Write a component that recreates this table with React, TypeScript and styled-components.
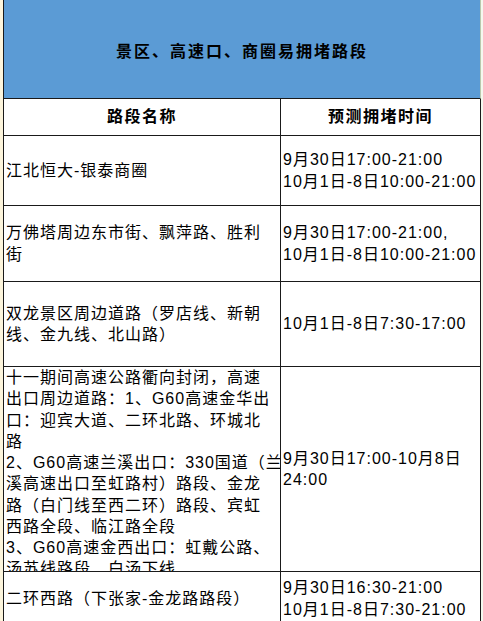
import styled, { createGlobalStyle } from "styled-components";

interface IRow {
  height: number;
  name: string[];
  time: string[];
  nameTop?: boolean;
}

const rows: IRow[] = [
  {
    height: 70,
    name: ["江北恒大-银泰商圈"],
    time: ["9月30日17:00-21:00", "10月1日-8日10:00-21:00"],
  },
  {
    height: 76,
    name: ["万佛塔周边东市街、飘萍路、胜利", "街"],
    time: ["9月30日17:00-21:00,", "10月1日-8日10:00-21:00"],
  },
  {
    height: 85,
    name: ["双龙景区周边道路（罗店线、新朝", "线、金九线、北山路）"],
    time: ["10月1日-8日7:30-17:00"],
  },
  {
    height: 205,
    nameTop: true,
    name: [
      "十一期间高速公路衢向封闭，高速",
      "出口周边道路：1、G60高速金华出",
      "口：迎宾大道、二环北路、环城北",
      "路",
      "2、G60高速兰溪出口：330国道（兰",
      "溪高速出口至虹路村）路段、金龙",
      "路（白门线至西二环）路段、宾虹",
      "西路全段、临江路全段",
      "3、G60高速金西出口：虹戴公路、",
      "汤苏线路段、白汤下线",
    ],
    time: ["9月30日17:00-10月8日", "24:00"],
  },
  {
    height: 54,
    name: ["二环西路（下张家-金龙路路段）"],
    time: ["9月30日16:30-21:00", "10月1日-8日7:30-21:00"],
  },
];

const GlobalStyle = createGlobalStyle`
  html, body {
    margin: 0;
    padding: 0;
    background: #fdf5dc;
    overflow: hidden;
  }
  body {
    font-family: "Liberation Sans", "Noto Sans CJK SC", sans-serif;
    color: #000;
  }
`;

const Sheet = styled.div`
  display: flex;
  width: 483px;
  height: 621px;
  overflow: hidden;
`;

const Gutter = styled.div<{ $w: number; $bg: string }>`
  flex: 0 0 ${(p) => p.$w}px;
  background: ${(p) => p.$bg};
`;

const Table = styled.div`
  flex: 0 0 478px;
  display: flex;
  flex-direction: column;
  border-left: 1px solid #1a1a1a;
  border-right: 1px solid #1a1a1a;
  box-sizing: border-box;
  background: #fff;
`;

const Title = styled.div`
  flex: 0 0 99px;
  height: 99px;
  box-sizing: border-box;
  display: flex;
  align-items: center;
  justify-content: center;
  background: #5b9bd5;
  border-bottom: 1px solid #1a1a1a;
  margin-right: -1px;
  border-right: 1px solid #b9c9ae;
  font-size: 16px;
  font-weight: 700;
  letter-spacing: 2px;
  padding-top: 1px;
`;

const Row = styled.div<{ $h: number }>`
  display: grid;
  grid-template-columns: 276px 200px;
  height: ${(p) => p.$h}px;
  flex: 0 0 ${(p) => p.$h}px;
  box-sizing: border-box;
  border-bottom: 1px solid #1a1a1a;
`;

const Cell = styled.div<{ $head?: boolean; $top?: boolean; $pad: number }>`
  display: flex;
  flex-direction: column;
  justify-content: ${(p) => (p.$top ? "flex-start" : "center")};
  align-items: ${(p) => (p.$head ? "center" : "flex-start")};
  box-sizing: border-box;
  overflow: hidden;
  padding-left: ${(p) => (p.$head ? 0 : p.$pad)}px;
  font-size: 16px;
  font-weight: ${(p) => (p.$head ? 700 : 400)};
  letter-spacing: ${(p) => (p.$head ? 1.5 : 1)}px;
  line-height: 21.25px;
  white-space: nowrap;

  & + & {
    border-left: 1px solid #1a1a1a;
  }
`;

const Line = styled.span`
  display: block;
`;

export default function App() {
  return (
    <>
      <GlobalStyle />
      <Sheet>
        <Gutter $w={3} $bg="#fdf5dc" />
        <Table>
          <Title>景区、高速口、商圈易拥堵路段</Title>
          <Row $h={37}>
            <Cell $head $pad={0}>
              路段名称
            </Cell>
            <Cell $head $pad={0}>
              预测拥堵时间
            </Cell>
          </Row>
          {rows.map((row, i) => (
            <Row key={i} $h={row.height}>
              <Cell $top={row.nameTop} $pad={2}>
                {row.name.map((line) => (
                  <Line key={line}>{line}</Line>
                ))}
              </Cell>
              <Cell $pad={2}>
                {row.time.map((line) => (
                  <Line key={line}>{line}</Line>
                ))}
              </Cell>
            </Row>
          ))}
        </Table>
        <Gutter $w={2} $bg="#f4f8ee" />
      </Sheet>
    </>
  );
}
